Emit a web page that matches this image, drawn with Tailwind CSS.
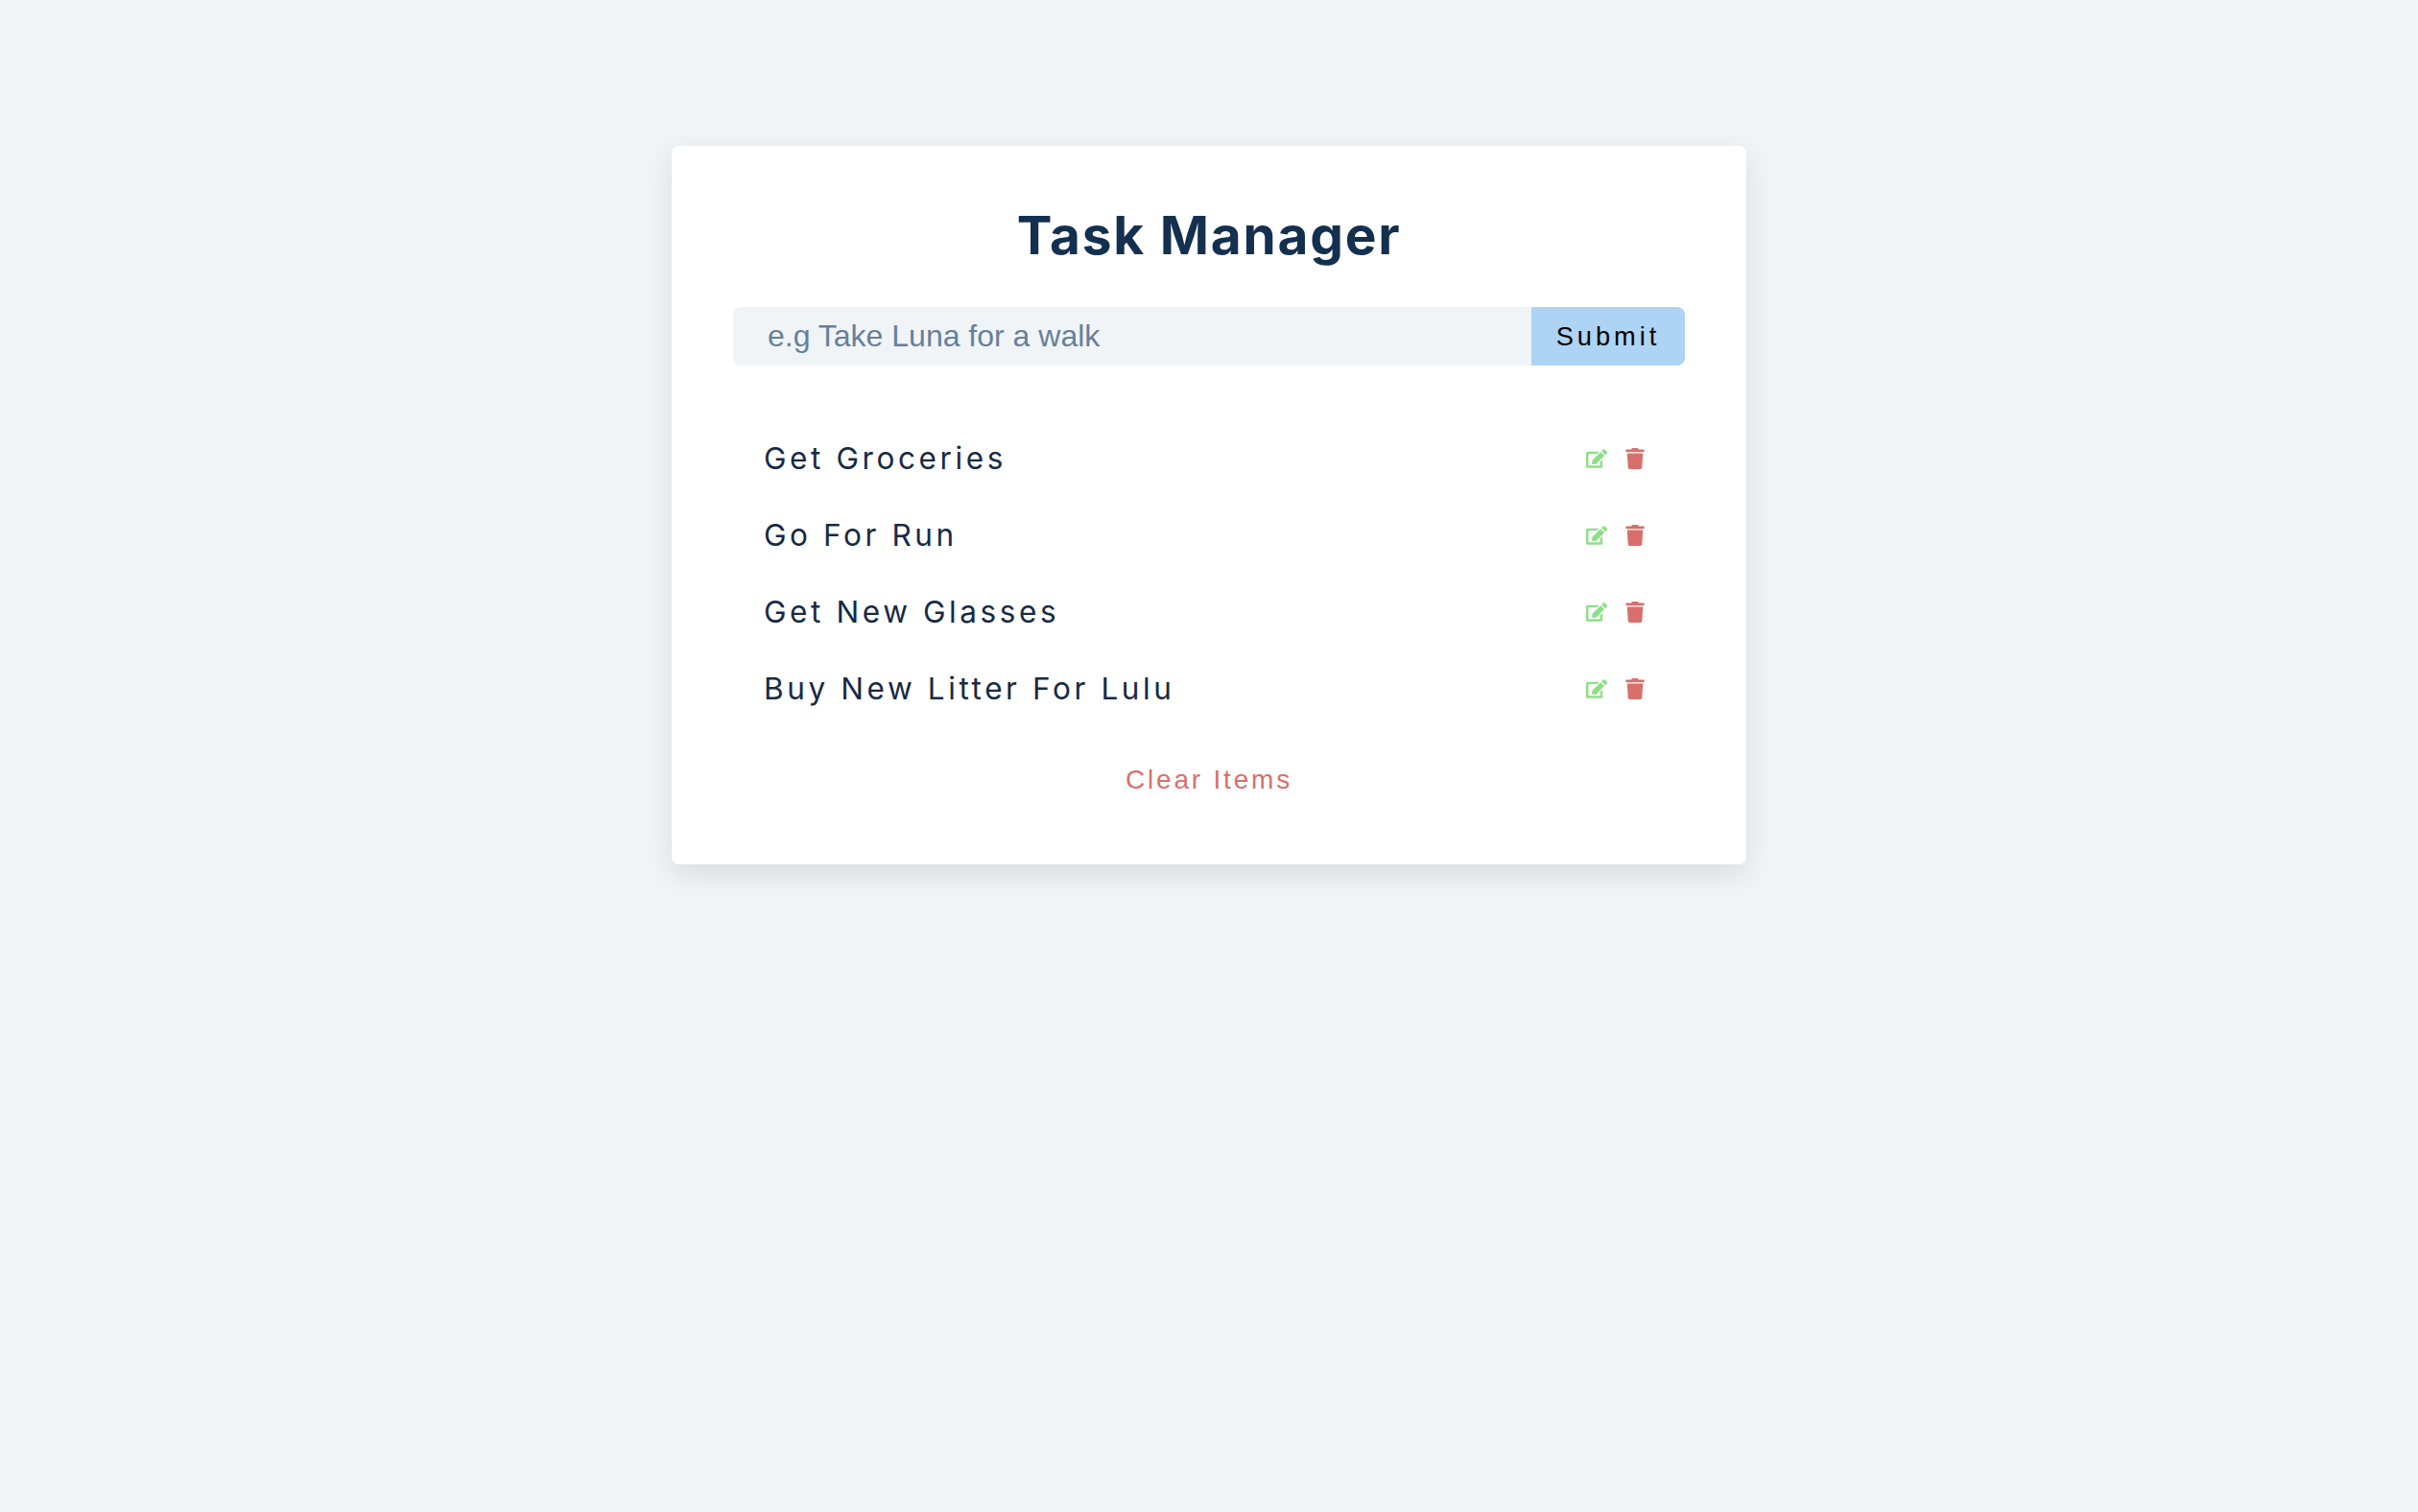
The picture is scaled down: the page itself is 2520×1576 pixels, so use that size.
<!DOCTYPE html>
<html lang="en">
<head>
<meta charset="utf-8">
<title>Task Manager</title>
<script src="https://cdn.jsdelivr.net/npm/@tailwindcss/browser@4"></script>
</head>
<body class="min-h-screen overflow-hidden bg-[#f0f4f7] pt-[152px] font-['Inter',sans-serif] text-[#172a45]">
<svg class="hidden">
  <symbol id="edit" viewBox="0 0 576 512"><path fill="currentColor" d="M402.600 83.200l90.200 90.200c3.800 3.800 3.800 10 0 13.800L274.400 405.600l-92.800 10.300c-12.400 1.400-22.900-9.100-21.500-21.500l10.300-92.800L388.800 83.200c3.800-3.800 10-3.800 13.800 0zm162-22.900l-48.800-48.800c-15.200-15.200-39.900-15.200-55.200 0l-35.400 35.400c-3.800 3.800-3.800 10 0 13.800l90.200 90.200c3.800 3.800 10 3.800 13.800 0l35.400-35.400c15.200-15.300 15.200-40 0-55.200zM384 346.200V448H64V128h229.800c3.200 0 6.200-1.300 8.500-3.500l40-40c7.600-7.600 2.200-20.500-8.500-20.500H48C21.500 64 0 85.500 0 112v352c0 26.500 21.500 48 48 48h352c26.500 0 48-21.500 48-48V306.200c0-10.700-12.900-16-20.500-8.500l-40 40c-2.200 2.300-3.500 5.300-3.500 8.500z"/></symbol>
  <symbol id="trash" viewBox="0 0 448 512"><path fill="currentColor" d="M432 32H312l-9.400-18.700A24 24 0 0 0 281.100 0H166.800a23.700 23.700 0 0 0-21.400 13.300L136 32H16A16 16 0 0 0 0 48v32a16 16 0 0 0 16 16h416a16 16 0 0 0 16-16V48a16 16 0 0 0-16-16zM53.200 467a48 48 0 0 0 47.900 45h245.800a48 48 0 0 0 47.900-45L416 128H32z"/></symbol>
</svg>
<main class="mx-auto h-[749px] w-[1120px] rounded-lg bg-white px-16 pt-[60px] shadow-[0_10px_30px_rgba(0,0,0,0.1)]">
  <h1 class="h-[67px] text-center text-[55px] leading-[67px] font-bold tracking-[1.75px] text-[#14304f]">Task Manager</h1>
  <form class="mt-[41px] flex h-[61px] font-['Liberation_Sans',sans-serif]">
    <input class="min-w-0 flex-1 rounded-l-lg bg-[#f0f4f7] pb-0.5 pl-9 text-[32px] placeholder:text-[#677f9b] outline-none" placeholder="e.g Take Luna for a walk">
    <button type="button" class="w-40 rounded-r-lg bg-[#aed4f5] pt-0.5 text-[27.2px] tracking-[4px] text-black">Submit</button>
  </form>
  <ul class="mt-[57px] flex flex-col">
    <li class="flex h-20 items-center justify-between pr-[42px] pl-8"><p class="text-[31.5px] tracking-[3.6px]">Get Groceries</p><div class="flex items-center gap-[19px]"><svg class="h-5 w-[22px] text-[#8ddf86]"><use href="#edit"/></svg><svg class="h-[22px] w-5 text-[#d7706c]"><use href="#trash"/></svg></div></li>
    <li class="flex h-20 items-center justify-between pr-[42px] pl-8"><p class="text-[31.5px] tracking-[3.6px]">Go For Run</p><div class="flex items-center gap-[19px]"><svg class="h-5 w-[22px] text-[#8ddf86]"><use href="#edit"/></svg><svg class="h-[22px] w-5 text-[#d7706c]"><use href="#trash"/></svg></div></li>
    <li class="flex h-20 items-center justify-between pr-[42px] pl-8"><p class="text-[31.5px] tracking-[3.6px]">Get New Glasses</p><div class="flex items-center gap-[19px]"><svg class="h-5 w-[22px] text-[#8ddf86]"><use href="#edit"/></svg><svg class="h-[22px] w-5 text-[#d7706c]"><use href="#trash"/></svg></div></li>
    <li class="flex h-20 items-center justify-between pr-[42px] pl-8"><p class="text-[31.5px] tracking-[3.6px]">Buy New Litter For Lulu</p><div class="flex items-center gap-[19px]"><svg class="h-5 w-[22px] text-[#8ddf86]"><use href="#edit"/></svg><svg class="h-[22px] w-5 text-[#d7706c]"><use href="#trash"/></svg></div></li>
  </ul>
  <button type="button" class="mx-auto mt-[39px] block font-['Liberation_Sans',sans-serif] text-[28px] leading-8 tracking-[2.8px] text-[#d7706c]">Clear Items</button>
</main>
</body>
</html>
